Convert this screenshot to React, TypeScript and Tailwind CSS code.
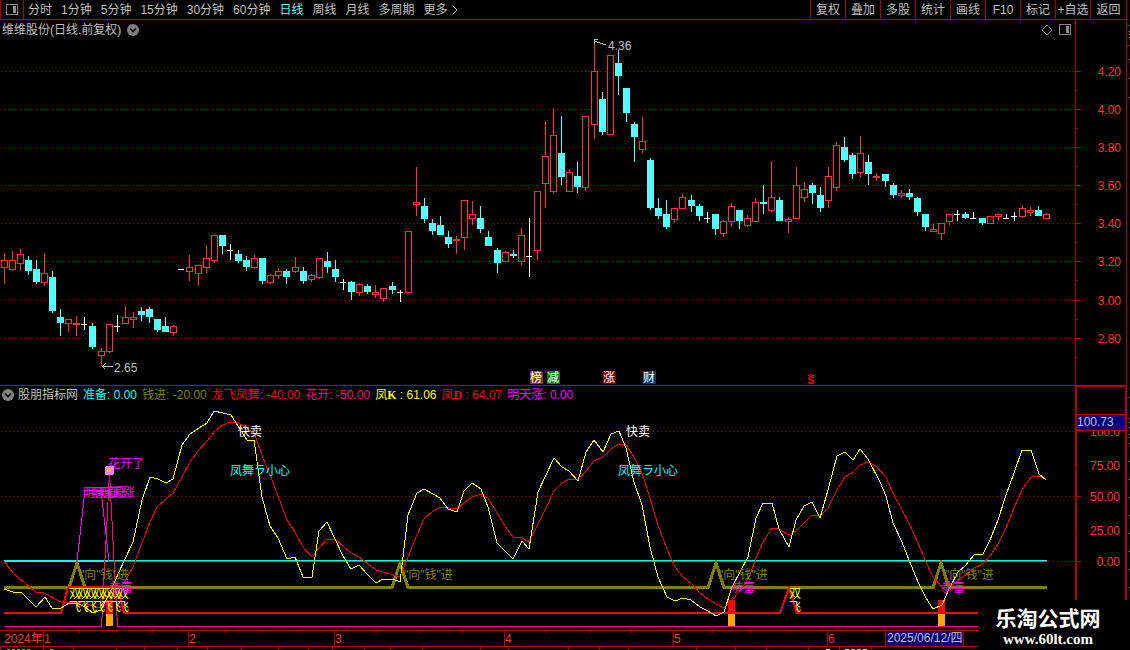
type Candle = [x: number, high: number, top: number, bottom: number, low: number, kind: 'r' | 'c' | 'w']

const candles: Candle[] = [
  [4, 253, 260, 268, 284, 'r'], [12, 251, 260, 270, 271, 'r'], [20, 249, 254, 264, 271, 'r'], [28, 256, 260, 271, 275, 'c'],
  [36, 260, 269, 282, 284, 'c'], [44, 253, 273, 283, 286, 'r'], [52, 271, 277, 311, 313, 'c'], [60, 309, 317, 323, 336, 'c'],
  [68, 319, 319, 324, 332, 'r'], [76, 316, 323, 325, 336, 'r'], [84, 317, 324, 325, 330, 'w'], [92, 323, 326, 347, 349, 'c'],
  [101, 348, 351, 356, 366, 'r'], [109, 324, 324, 352, 353, 'r'], [117, 315, 326, 327, 332, 'w'], [125, 306, 317, 324, 324, 'r'],
  [133, 312, 317, 320, 328, 'r'], [141, 307, 311, 315, 321, 'c'], [149, 307, 309, 317, 323, 'c'], [157, 319, 319, 330, 332, 'c'],
  [165, 317, 326, 332, 332, 'c'], [173, 325, 326, 333, 336, 'r'], [181, 269, 269, 270, 270, 'w'], [189, 255, 267, 272, 281, 'r'],
  [198, 265, 265, 274, 286, 'r'], [206, 245, 258, 268, 273, 'r'], [214, 234, 235, 261, 263, 'r'], [222, 235, 235, 246, 254, 'c'],
  [230, 244, 250, 251, 260, 'w'], [238, 250, 254, 261, 263, 'c'], [246, 256, 260, 267, 271, 'c'], [254, 255, 258, 268, 269, 'r'],
  [262, 258, 258, 281, 284, 'c'], [270, 274, 275, 283, 284, 'r'], [278, 268, 271, 276, 279, 'r'], [286, 269, 271, 277, 284, 'c'],
  [295, 257, 267, 272, 273, 'r'], [303, 267, 271, 281, 284, 'c'], [311, 274, 275, 280, 282, 'r'], [319, 258, 258, 278, 279, 'r'],
  [327, 252, 261, 267, 273, 'c'], [335, 260, 269, 277, 282, 'c'], [343, 279, 282, 283, 290, 'w'], [351, 281, 282, 292, 300, 'c'],
  [359, 283, 284, 293, 296, 'r'], [367, 284, 286, 292, 294, 'c'], [375, 285, 292, 295, 298, 'r'], [383, 288, 288, 299, 302, 'r'],
  [392, 282, 286, 290, 294, 'c'], [400, 290, 292, 293, 302, 'w'], [408, 231, 231, 293, 293, 'r'], [416, 167, 202, 205, 216, 'r'],
  [424, 198, 206, 219, 223, 'c'], [432, 219, 223, 231, 235, 'c'], [440, 216, 225, 235, 235, 'c'], [448, 231, 237, 244, 248, 'c'],
  [456, 236, 239, 241, 254, 'r'], [464, 200, 200, 238, 250, 'r'], [472, 201, 214, 219, 225, 'r'], [480, 206, 218, 229, 233, 'c'],
  [488, 231, 237, 246, 246, 'c'], [497, 248, 250, 263, 273, 'c'], [505, 251, 252, 262, 263, 'r'], [513, 250, 254, 256, 258, 'c'],
  [521, 228, 235, 262, 265, 'r'], [529, 218, 256, 257, 277, 'w'], [537, 191, 191, 251, 260, 'r'], [545, 121, 156, 184, 208, 'r'],
  [553, 108, 135, 192, 193, 'r'], [561, 116, 153, 177, 185, 'c'], [569, 169, 172, 192, 192, 'r'], [577, 162, 176, 187, 193, 'c'],
  [585, 116, 116, 188, 191, 'r'], [594, 43, 71, 125, 139, 'r'], [602, 92, 99, 132, 135, 'c'], [610, 55, 55, 135, 135, 'r'],
  [618, 50, 63, 76, 95, 'c'], [626, 88, 88, 113, 122, 'c'], [634, 122, 124, 137, 162, 'c'], [642, 117, 141, 150, 153, 'r'],
  [650, 158, 160, 208, 210, 'c'], [658, 198, 208, 216, 219, 'c'], [666, 200, 214, 227, 229, 'c'], [674, 208, 208, 220, 223, 'r'],
  [682, 194, 197, 209, 209, 'r'], [691, 195, 200, 206, 212, 'c'], [699, 204, 206, 216, 221, 'c'], [707, 212, 218, 219, 223, 'w'],
  [715, 214, 214, 229, 235, 'c'], [723, 220, 221, 234, 237, 'r'], [731, 203, 206, 222, 227, 'r'], [739, 210, 210, 221, 229, 'c'],
  [747, 215, 218, 226, 227, 'r'], [755, 198, 202, 222, 222, 'r'], [763, 185, 202, 204, 214, 'c'], [771, 161, 197, 211, 212, 'r'],
  [779, 197, 200, 221, 221, 'c'], [788, 217, 219, 222, 233, 'r'], [796, 167, 185, 219, 219, 'r'], [804, 182, 189, 198, 202, 'r'],
  [812, 183, 185, 193, 204, 'c'], [820, 187, 195, 208, 212, 'c'], [828, 167, 176, 201, 208, 'r'], [836, 142, 145, 188, 191, 'r'],
  [844, 137, 147, 160, 162, 'c'], [852, 153, 155, 174, 179, 'c'], [860, 136, 153, 173, 177, 'r'], [868, 155, 162, 174, 185, 'c'],
  [876, 173, 176, 178, 181, 'r'], [885, 174, 174, 181, 187, 'c'], [893, 183, 185, 195, 198, 'c'], [901, 190, 193, 196, 198, 'r'],
  [909, 189, 193, 197, 200, 'c'], [917, 197, 198, 212, 216, 'c'], [925, 214, 214, 227, 231, 'c'], [933, 224, 229, 232, 232, 'r'],
  [941, 223, 223, 234, 240, 'r'], [949, 214, 214, 222, 225, 'r'], [957, 210, 214, 215, 221, 'w'], [965, 212, 214, 218, 219, 'c'],
  [973, 212, 218, 219, 219, 'w'], [982, 218, 218, 223, 225, 'c'], [990, 216, 216, 224, 224, 'r'], [998, 213, 214, 217, 221, 'r'],
  [1006, 214, 218, 219, 219, 'w'], [1014, 212, 216, 217, 221, 'w'], [1022, 205, 208, 217, 218, 'r'], [1030, 207, 210, 213, 216, 'r'],
  [1038, 206, 210, 216, 216, 'c'], [1046, 213, 214, 219, 219, 'r'],
]

const kLine =
  '4,589 13,592 21,592 36,607 45,597 52,608 61,608 69,603 77,603 85,607 93,613 101,610 110,592 124,561 133,542 142,500 150,477 158,479 166,483 173,479 182,445 190,434 199,428 207,423 214,411 223,413 231,415 238,426 247,440 254,440 262,497 270,526 278,538 287,559 295,557 303,577 312,577 319,531 327,522 335,539 343,556 351,569 359,565 367,574 376,583 383,579 393,579 400,582 408,515 417,493 424,489 433,494 440,498 448,509 457,512 464,491 472,483 481,489 488,507 497,543 505,551 513,559 522,541 529,549 538,492 546,475 554,458 562,467 569,471 578,481 586,452 594,440 603,452 611,434 619,431 626,448 634,482 642,505 650,547 658,577 667,597 675,601 683,598 691,600 700,607 708,611 716,616 724,612 732,587 740,572 748,557 756,518 763,503 772,503 779,529 789,547 796,520 804,506 812,502 820,518 828,490 837,456 845,452 853,460 860,449 868,459 880,482 886,496 893,523 902,542 909,560 918,582 926,598 933,609 942,605 949,589 958,572 965,566 974,555 983,554 990,540 998,520 1006,495 1014,473 1022,450 1031,450 1039,474 1046,480'

const dLine =
  '4,561 13,573 25,583 36,592 44,593 61,602 77,602 87,604 95,607 103,607 113,597 124,583 133,567 142,543 150,522 157,507 166,499 173,493 182,477 190,462 198,451 207,441 215,431 223,425 231,422 238,423 247,428 255,435 263,458 272,480 287,520 295,532 303,547 312,557 319,548 327,539 336,540 343,546 351,553 359,557 367,563 376,570 390,574 400,577 408,557 417,535 424,519 433,511 441,507 457,509 464,503 472,497 481,494 488,498 497,513 505,526 513,537 522,538 529,542 538,524 546,508 554,491 562,483 569,479 578,480 586,471 594,461 603,457 611,449 619,444 626,445 634,457 642,473 650,498 658,525 667,549 675,567 683,577 691,583 700,593 708,599 716,604 724,608 732,600 743,587 750,575 756,558 763,542 772,528 779,529 789,535 796,531 804,523 812,515 820,516 828,508 837,490 845,477 853,472 860,465 868,462 876,466 886,477 893,493 909,523 918,543 926,562 933,577 942,587 949,587 958,581 974,568 983,564 990,556 998,544 1006,528 1014,508 1022,490 1031,477 1039,476 1046,479'

const periods = ['分时', '1分钟', '5分钟', '15分钟', '30分钟', '60分钟', '日线', '周线', '月线', '多周期']
const tools = ['复权', '叠加', '多股', '统计', '画线', 'F10', '标记', '+自选']

const prices = [
  { y: 71, label: '4.20' },
  { y: 109, label: '4.00' },
  { y: 147, label: '3.80' },
  { y: 185, label: '3.60' },
  { y: 223, label: '3.40' },
  { y: 261, label: '3.20' },
  { y: 300, label: '3.00' },
  { y: 338, label: '2.80' },
]

const tags = [
  { x: 530, text: '榜', fill: '#804000' },
  { x: 547, text: '减', fill: '#008000' },
  { x: 603, text: '涨', fill: '#800000' },
  { x: 643, text: '财', fill: '#003c78' },
]

const months = [
  { x: 43, label: '1' },
  { x: 188, label: '2' },
  { x: 334, label: '3' },
  { x: 504, label: '4' },
  { x: 673, label: '5' },
  { x: 827, label: '6' },
]
const weekTicks = [79, 116, 152, 225, 261, 298, 377, 419, 462, 546, 589, 631, 712, 750, 789, 868]
const footTicks = [0, 43, 73, 116, 144, 177, 207, 241, 278, 308, 332, 364, 390, 422, 480, 508, 568, 599, 628, 696, 735, 766, 808, 839, 871]
const doubleFly = [69, 77, 85, 93, 101, 109, 117, 789]

const candleColor = { r: '#ff3232', c: '#54ffff', w: '#ffffff' }

function CandleShape({ data }: { data: Candle }) {
  const [x, high, top, bottom, low, kind] = data
  const color = candleColor[kind]
  if (kind === 'r') {
    return (
      <g>
        {top > high && <rect x={x} y={high} width={1} height={top - high} fill={color} />}
        {low > bottom && <rect x={x} y={bottom} width={1} height={low - bottom} fill={color} />}
        <rect x={x - 2.5} y={top + 0.5} width={6} height={bottom - top - 1} fill="#000" stroke={color} />
      </g>
    )
  }
  return (
    <g fill={color}>
      <rect x={x} y={high} width={1} height={low - high} />
      <rect x={x - 3} y={top} width={kind === 'w' ? 6 : 7} height={bottom - top} />
    </g>
  )
}

function PanelIcon() {
  return (
    <svg width="13" height="11" viewBox="0 0 13 11" shapeRendering="crispEdges">
      <rect x="0.5" y="0.5" width="11" height="10" rx="1" fill="none" stroke="#888" />
      <rect x="7" y="2" width="3" height="7" fill="#909090" />
    </svg>
  )
}

function ChevronBadge() {
  return (
    <svg width="12" height="12" viewBox="0 0 12 12">
      <circle cx="6" cy="6" r="6" fill="#808080" />
      <path d="M3 4.5 L6 7.5 L9 4.5" fill="none" stroke="#111" strokeWidth="1.6" />
    </svg>
  )
}

function Toolbar() {
  return (
    <header className="flex h-5 justify-between border-b border-l border-[#b00000]">
      <nav className="flex">
        <button aria-label="侧栏" className="flex w-[23px] items-center justify-center border-r border-[#b00000]">
          <PanelIcon />
        </button>
        <div className="ml-1 flex items-center gap-[9px]">
          {periods.map((p) => (
            <button key={p} className={p === '日线' ? 'text-[#54ffff]' : ''}>{p}</button>
          ))}
          <button className="flex items-center gap-1">
            更多
            <svg width="6" height="10" viewBox="0 0 6 10">
              <path d="M0.5 0.5 L5 5 L0.5 9.5" fill="none" stroke="#c0c0c0" />
            </svg>
          </button>
        </div>
      </nav>
      <div className="flex">
        {tools.map((t) => (
          <button key={t} className="w-[35px] border-l border-[#b00000] whitespace-nowrap">{t}</button>
        ))}
        <button className="w-9 border-l border-[#b00000]">返回</button>
      </div>
    </header>
  )
}

function PriceChart() {
  return (
    <svg className="block h-[346px] w-full" shapeRendering="crispEdges">
      <g transform="translate(0 -39)">
        {prices.map((p) => (
          <line key={p.y} x1="1" x2="100%" y1={p.y + 0.5} y2={p.y + 0.5} stroke="#b00000" strokeDasharray="1 3" />
        ))}
        {candles.map((c) => (
          <CandleShape key={c[0]} data={c} />
        ))}
        <g fill="none" stroke="#c0c0c0">
          <path d="M102 366.5 H113 M105.5 363.5 L102.5 366.5 L105.5 369.5" />
          <path d="M595 41.5 L606 45 M598 39.5 H594.5 V44" />
        </g>
        <g fill="#c0c0c0">
          <text x="114" y="372">2.65</text>
          <text x="608" y="50">4.36</text>
        </g>
        {tags.map((t) => (
          <g key={t.x}>
            <path d={`M${t.x} 371 h11 l2 2 v11 h-13 z`} fill={t.fill} />
            <text x={t.x} y="382" fill="#fff">{t.text}</text>
          </g>
        ))}
        <text x="811" y="384" textAnchor="middle" fill="#f00" className="text-[10px] font-bold">S</text>
        <path d="M808.5 376 l2.5 -2 l2.5 2" fill="none" stroke="#f00" />
      </g>
    </svg>
  )
}

function PriceAxis() {
  return (
    <svg className="block h-[365px] w-[51px] border-l border-[#b00000]" shapeRendering="crispEdges">
      <g transform="translate(0 -20)">
        {prices.map((p) => (
          <g key={p.y} fill="#b00000">
            <rect x="0" y={p.y} width="5" height="1" />
            <rect x="0" y={p.y + 19} width="2" height="1" />
            <text x="45" y={p.y + 5} textAnchor="end" fill="#ff3232">{p.label}</text>
          </g>
        ))}
      </g>
    </svg>
  )
}

function IndicatorChart() {
  return (
    <svg className="block h-[227px] w-full" shapeRendering="crispEdges">
      <g transform="translate(0 -403)">
        {[431.5, 496.5, 561.5].map((y) => (
          <line key={y} x1="1" x2="100%" y1={y} y2={y} stroke="#b00000" strokeDasharray="1 3" />
        ))}
        <rect x="4" y="560" width="1043" height="2" fill="#0ff" />
        <g fill="none">
          <polyline points="77,561.5 85,490 101,490 109,561.5 1047,561.5" stroke="#f0f" />
          <path d="M4 587.5 H69 L77 563 L85 587.5 H392 L400 563 L408 587.5 H708 L716 563 L724 587.5 H933 L941 563 L949 587.5 H1047" stroke="#808000" strokeWidth="3" />
          <path d="M4 613 H61 L68 587 H118 L124 613 H780 L789 588 L797 613 H1000" stroke="#f00" strokeWidth="2" />
          <path d="M4 626.5 H101.5 L109.5 473 L117.5 626.5 H1000" stroke="#ff0080" />
        </g>
        {[106, 728, 938].map((x) => (
          <g key={x}>
            <rect x={x} y="600" width="7" height="14" fill="#f00" />
            <rect x={x} y="614" width="7" height="12" fill="#ffa500" />
          </g>
        ))}
        <polyline points={dLine} fill="none" stroke="#f00" />
        <polyline points={kLine} fill="none" stroke="#ff0" />

        <g fill="#808000">
          {[80, 404, 719, 945].map((x) => (
            <text key={x} x={x} y="579">"向"钱"进</text>
          ))}
        </g>
        <g fill="#ff0">
          {doubleFly.map((x) => (
            <g key={x}>
              <text x={x} y="598">双</text>
              <text x={x} y="611">飞</text>
            </g>
          ))}
        </g>
        <g fill="#f0f">
          <text x="108" y="468">花开了</text>
          {[83, 91, 99].map((x) => (
            <text key={x} x={x} y="497">明天涨</text>
          ))}
          {[109, 731, 941].map((x) => (
            <text key={x} x={x} y="592">恭喜</text>
          ))}
        </g>
        {[238, 626].map((x) => (
          <g key={x}>
            <text x={x} y="436" fill="#fff">快卖</text>
            <text x={x - 8} y="475" fill="#0ff">凤舞ラ小心</text>
          </g>
        ))}
        <rect x="105" y="466" width="9" height="9" rx="2" fill="#ff80ff" />
        <rect x="107" y="468" width="4" height="4" rx="1" fill="#ffc000" />
      </g>
    </svg>
  )
}

function IndicatorAxis() {
  return (
    <svg className="block h-[244px] w-[51px] border-t border-r border-l-2 border-[#b00000]" shapeRendering="crispEdges">
      <g transform="translate(0 -387)">
        <g fill="#b00000">
          <rect x="0" y="496" width="4" height="1" />
          <rect x="0" y="561" width="4" height="1" />
          <rect x="0" y="464" width="1" height="1" />
          <rect x="0" y="529" width="1" height="1" />
        </g>
        <g fill="#ff3232" textAnchor="end">
          <text x="43" y="436">100.0</text>
          <text x="43" y="470">75.00</text>
          <text x="43" y="501">50.00</text>
          <text x="43" y="535">25.00</text>
          <text x="43" y="566">0.00</text>
        </g>
        <rect x="0" y="414" width="49" height="17" fill="#b00000" />
        <rect x="0" y="415" width="49" height="15" fill="#000080" />
        <text x="0" y="426" fill="#c0c0c0">100.73</text>
      </g>
    </svg>
  )
}

function IndicatorLegend() {
  return (
    <div className="flex h-[17px] items-center gap-[5px] pl-[2px] whitespace-nowrap">
      <div className="flex items-center gap-1">
        <ChevronBadge />
        <span>股朋指标网</span>
      </div>
      <span className="text-[#00ffff]">准备: 0.00</span>
      <span className="text-[#808000]">钱进: -20.00</span>
      <span className="text-[#ff0000]">龙飞凤舞: -40.00</span>
      <span className="text-[#ff0080]">花开: -50.00</span>
      <span className="text-[#ffff00]">
        凤<b className="font-['Liberation_Serif']">K</b> : 61.06
      </span>
      <span className="text-[#ff0000]">
        凤<b className="font-['Liberation_Serif']">D</b> : 64.07
      </span>
      <span className="text-[#ff00ff]">明天涨: 0.00</span>
    </div>
  )
}

function TimeAxis() {
  return (
    <svg className="block h-5 w-full" shapeRendering="crispEdges">
      <g fill="#b00000">
        <rect x="0" y="0" width="100%" height="1" />
        <rect x="0" y="16" width="100%" height="1" />
        {weekTicks.map((x) => (
          <rect key={x} x={x} y="1" width="1" height="2" />
        ))}
        {footTicks.map((x) => (
          <rect key={x} x={x} y="17" width="1" height="3" />
        ))}
        {months.map((m) => (
          <rect key={m.x} x={m.x} y="1" width="1" height="15" />
        ))}
      </g>
      <g fill="#ff3232">
        <text x="4" y="13">2024年</text>
        {months.map((m) => (
          <text key={m.x} x={m.x + 1} y="13">{m.label}</text>
        ))}
      </g>
      <rect x="885.5" y="0.5" width="78" height="16" fill="#000080" stroke="#b00000" />
      <text x="887" y="12" fill="#c0c0c0">2025/06/12/四</text>
      {/* top edge of the tab strip underneath */}
      <path d="M7 19.5 H32 M50 19.5 H54" stroke="#909090" strokeDasharray="3 2" />
      <path d="M826 19.5 H830 M845 19.5 H867" stroke="#54ffff" strokeDasharray="4 2" />
    </svg>
  )
}

function SideStrip() {
  return (
    <aside className="w-1 shrink-0">
      <svg className="block h-[650px] w-1" shapeRendering="crispEdges">
        <rect width="1" height="650" fill="#b00000" />
        {[25, 45, 397, 418, 437].map((y) => (
          <rect key={y} x="1" y={y} width="3" height="1" fill="#b00000" />
        ))}
        {[31, 34, 37, 59, 78, 97, 422, 427, 434, 443, 461, 479, 497, 515, 533, 551, 569, 587].map((y) => (
          <rect key={y} x="3" y={y} width="1" height="1" fill="#c0c0c0" />
        ))}
      </svg>
    </aside>
  )
}

export default function App() {
  return (
    <div className="relative flex min-h-screen overflow-hidden bg-black font-['Liberation_Sans','Noto_Sans_CJK_SC',sans-serif] text-[12px] leading-4 text-[#c0c0c0]">
      <main className="min-w-0 flex-1">
        <Toolbar />

        <section className="flex border-b border-[#b00000]">
          <div className="min-w-0 flex-1">
            <div className="flex h-[19px] items-center justify-between pr-[3px] pl-[2px]">
              <div className="flex items-center gap-[6px]">
                <h1>维维股份(日线.前复权)</h1>
                <ChevronBadge />
              </div>
              <div className="flex items-center gap-[6px]">
                <svg width="12" height="12" viewBox="0 0 12 12">
                  <path d="M6 1 L11 6 L6 11 L1 6 Z" fill="none" stroke="#808080" />
                </svg>
                <PanelIcon />
              </div>
            </div>
            <PriceChart />
          </div>
          <PriceAxis />
        </section>

        <section className="flex">
          <div className="min-w-0 flex-1">
            <IndicatorLegend />
            <IndicatorChart />
          </div>
          <IndicatorAxis />
        </section>

        <TimeAxis />
      </main>

      <SideStrip />

      <div className="absolute right-0 bottom-0 flex h-[50px] w-[152px] flex-col items-center bg-black pt-2 pr-3 text-white">
        <div className="text-[21px] leading-[22px] font-bold">乐淘公式网</div>
        <div className="font-['Liberation_Serif'] text-[15px] leading-[18px] font-bold">www.60lt.com</div>
      </div>
    </div>
  )
}
